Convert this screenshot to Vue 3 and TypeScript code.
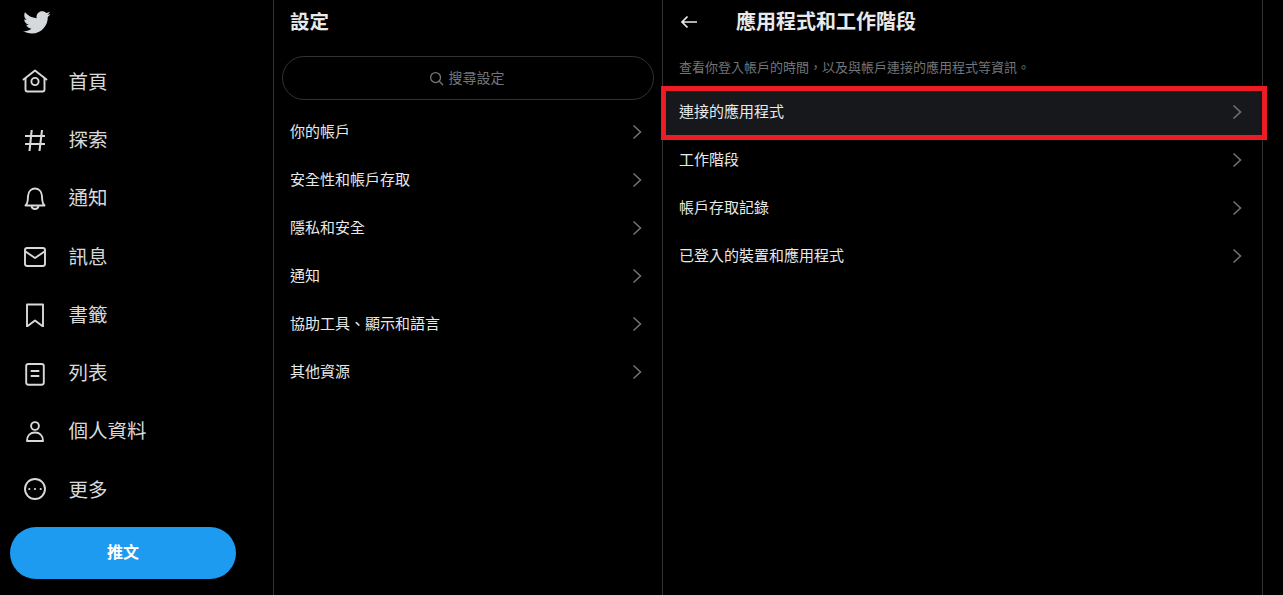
<script setup lang="ts">
interface NavItem {
  label: string;
  icon: string;
}

const navItems: NavItem[] = [
  { label: '首頁', icon: 'home' },
  { label: '探索', icon: 'hash' },
  { label: '通知', icon: 'bell' },
  { label: '訊息', icon: 'mail' },
  { label: '書籤', icon: 'bookmark' },
  { label: '列表', icon: 'list' },
  { label: '個人資料', icon: 'person' },
  { label: '更多', icon: 'more' }
];

const settingsItems = ['你的帳戶', '安全性和帳戶存取', '隱私和安全', '通知', '協助工具、顯示和語言', '其他資源'];

const detailItems = ['連接的應用程式', '工作階段', '帳戶存取記錄', '已登入的裝置和應用程式'];

const hint = '查看你登入帳戶的時間\uFF0C以及與帳戶連接的應用程式等資訊。';
</script>

<template>
  <div class="page">
    <aside class="sidebar">
      <div class="logo">
        <svg viewBox="0 0 24 24" width="29" height="29" fill="#d6d9db">
          <path d="M23.643 4.937c-.835.37-1.732.62-2.675.733.962-.576 1.7-1.49 2.048-2.578-.9.534-1.897.922-2.958 1.13-.85-.904-2.06-1.47-3.4-1.47-2.572 0-4.658 2.086-4.658 4.66 0 .364.042.718.12 1.06-3.873-.195-7.304-2.05-9.602-4.868-.4.69-.63 1.49-.63 2.342 0 1.616.823 3.043 2.072 3.878-.764-.025-1.482-.234-2.11-.583v.06c0 2.257 1.605 4.14 3.737 4.568-.392.106-.803.162-1.227.162-.3 0-.593-.028-.877-.082.593 1.85 2.313 3.198 4.352 3.234-1.595 1.25-3.604 1.995-5.786 1.995-.376 0-.747-.022-1.112-.065 2.062 1.323 4.51 2.093 7.14 2.093 8.57 0 13.255-7.098 13.255-13.254 0-.2-.005-.402-.014-.602.91-.658 1.7-1.477 2.323-2.41z" />
        </svg>
      </div>
      <nav class="nav">
        <a v-for="item in navItems" :key="item.label" class="nav-item">
          <svg class="nav-icon" viewBox="0 0 26 26" fill="none" stroke="#d9d9d9" stroke-width="1.9" stroke-linejoin="round">
            <template v-if="item.icon === 'home'">
              <path d="M1.500 11.500 13 2.500l11.500 9" stroke-linecap="round" />
              <path d="M3.500 10v11.500a2 2 0 0 0 2 2h15a2 2 0 0 0 2-2V10" />
              <circle cx="13" cy="13.500" r="3.600" />
            </template>
            <template v-else-if="item.icon === 'hash'">
              <path stroke-width="2.100" d="M3 10h20M3 18h20M9.700 4 7.500 25M20 4l-2.500 21" />
            </template>
            <template v-else-if="item.icon === 'bell'">
              <path d="M3.500 20.500c1.200-1.200 2-2.800 2.200-5l.4-5C6.500 6 9.500 3.500 13 3.500s6.500 2.500 6.900 7l.4 5c.2 2.200 1 3.800 2.200 5z" />
              <path d="M9.500 21c.3 1.800 1.700 3 3.500 3s3.200-1.200 3.500-3" />
            </template>
            <template v-else-if="item.icon === 'mail'">
              <rect x="3" y="5" width="20" height="18" rx="2.200" />
              <path d="M3.500 8.500 13 15l9.500-6.500" />
            </template>
            <template v-else-if="item.icon === 'bookmark'">
              <path d="M5 3.500h16v22l-8-6-8 6z" />
            </template>
            <template v-else-if="item.icon === 'list'">
              <rect x="4.200" y="4" width="17.600" height="20.700" rx="2.200" />
              <path d="M8.700 11h8.600M8.700 16h8.600" />
            </template>
            <template v-else-if="item.icon === 'person'">
              <circle cx="13" cy="8" r="3.900" />
              <path d="M5 23c0-5.500 3.500-8.500 8-8.500s8 3 8 8.500z" />
            </template>
            <template v-else>
              <circle cx="13" cy="13" r="10" />
              <circle cx="7.300" cy="13" r="1.100" fill="#d9d9d9" stroke="none" />
              <circle cx="13" cy="13" r="1.100" fill="#d9d9d9" stroke="none" />
              <circle cx="18.700" cy="13" r="1.100" fill="#d9d9d9" stroke="none" />
            </template>
          </svg>
          <span>{{ item.label }}</span>
        </a>
      </nav>
      <button type="button" class="tweet">推文</button>
    </aside>

    <section class="settings">
      <h2 class="settings-title">設定</h2>
      <div class="search">
        <svg viewBox="0 0 16 16" width="15" height="15" fill="none" stroke="#71767b" stroke-width="1.400">
          <circle cx="7" cy="7" r="5.300" />
          <path d="M11 11l3.600 3.600" stroke-linecap="round" />
        </svg>
        <span>搜尋設定</span>
      </div>
      <ul class="menu">
        <li v-for="item in settingsItems" :key="item">
          <span>{{ item }}</span>
          <svg class="chevron" viewBox="0 0 10 16" width="10" height="16" fill="none" stroke="#71767b" stroke-width="1.500">
            <path d="M1.500 1.500 8.500 8l-7 6.500" />
          </svg>
        </li>
      </ul>
    </section>

    <section class="detail">
      <header class="detail-header">
        <svg viewBox="0 0 18 14" width="18" height="14" fill="none" stroke="#e7e9ea" stroke-width="1.700">
          <path d="M17 7H2M7.500 1.500 2 7l5.500 5.500" />
        </svg>
        <h2>應用程式和工作階段</h2>
      </header>
      <p class="hint">{{ hint }}</p>
      <ul class="menu">
        <li v-for="(item, index) in detailItems" :key="item" :class="{ active: index === 0 }">
          <span>{{ item }}</span>
          <svg class="chevron" viewBox="0 0 10 16" width="10" height="16" fill="none" stroke="#71767b" stroke-width="1.500">
            <path d="M1.500 1.500 8.500 8l-7 6.500" />
          </svg>
          <i v-if="index === 0" class="marker"></i>
        </li>
      </ul>
    </section>
  </div>
</template>

<style scoped>
.page {
  display: flex;
  height: 595px;
  overflow: hidden;
  background: #000;
  color: #e7e9ea;
  font-family: "Noto Sans CJK TC", "Noto Sans", sans-serif;
}

.sidebar {
  box-sizing: border-box;
  width: 274px;
  flex: none;
  border-right: 1px solid #2f3336;
  display: flex;
  flex-direction: column;
}

.logo {
  height: 52px;
  padding: 8px 0 0 21.5px;
  box-sizing: border-box;
}

.logo svg {
  display: block;
}

.nav {
  display: flex;
  flex-direction: column;
}

.nav-item {
  display: flex;
  align-items: center;
  gap: 20.6px;
  height: 58.3px;
  padding-left: 22px;
  font-size: 19.5px;
  color: #d9d9d9;
}

.nav-item span {
  padding-bottom: 2px;
}

.nav-icon {
  width: 26px;
  height: 26px;
  flex: none;
}

.tweet {
  width: 226px;
  height: 52px;
  margin: 9px 0 0 10px;
  padding: 0 0 4px;
  border: none;
  border-radius: 26px;
  background: #1d9bf0;
  color: #fff;
  font: inherit;
  font-size: 16px;
  font-weight: 700;
}

.settings {
  box-sizing: border-box;
  width: 389px;
  flex: none;
  border-right: 1px solid #2f3336;
}

.settings-title {
  margin: 0;
  height: 56px;
  padding: 7px 0 0 16px;
  box-sizing: border-box;
  font-size: 19.5px;
  line-height: 28px;
  font-weight: 700;
}

.search {
  box-sizing: border-box;
  height: 44px;
  margin: 0 8px;
  padding-right: 3px;
  border: 1px solid #2f3336;
  border-radius: 22px;
  display: flex;
  align-items: center;
  justify-content: center;
  gap: 5px;
  font-size: 14px;
  color: #71767b;
}

.search span {
  padding-bottom: 2px;
}

.menu {
  list-style: none;
  margin: 0;
  padding: 0;
}

.settings .menu {
  margin-top: 8px;
}

.menu li {
  position: relative;
  height: 48px;
  display: flex;
  align-items: center;
  justify-content: space-between;
  padding: 0 20px 0 16px;
  font-size: 15px;
  color: #e7e9ea;
}

.menu li span {
  padding-bottom: 4px;
}

.menu li.active {
  background: #16181c;
}

.marker {
  position: absolute;
  left: -2px;
  right: -5px;
  top: -2px;
  bottom: -4px;
  border: 5px solid #ed1c24;
  pointer-events: none;
}

.detail {
  box-sizing: border-box;
  width: 600px;
  flex: none;
  border-right: 1px solid #2f3336;
}

.detail-header {
  display: flex;
  align-items: center;
  gap: 38px;
  height: 44px;
  padding-left: 17px;
}

.detail-header h2 {
  margin: 0;
  padding-bottom: 4px;
  font-size: 20px;
  font-weight: 700;
}

.hint {
  margin: 0;
  height: 44px;
  padding: 14px 0 0 16px;
  box-sizing: border-box;
  font-size: 13px;
  line-height: 18px;
  color: #71767b;
}
</style>

<style>
body {
  background: #000;
}
</style>
